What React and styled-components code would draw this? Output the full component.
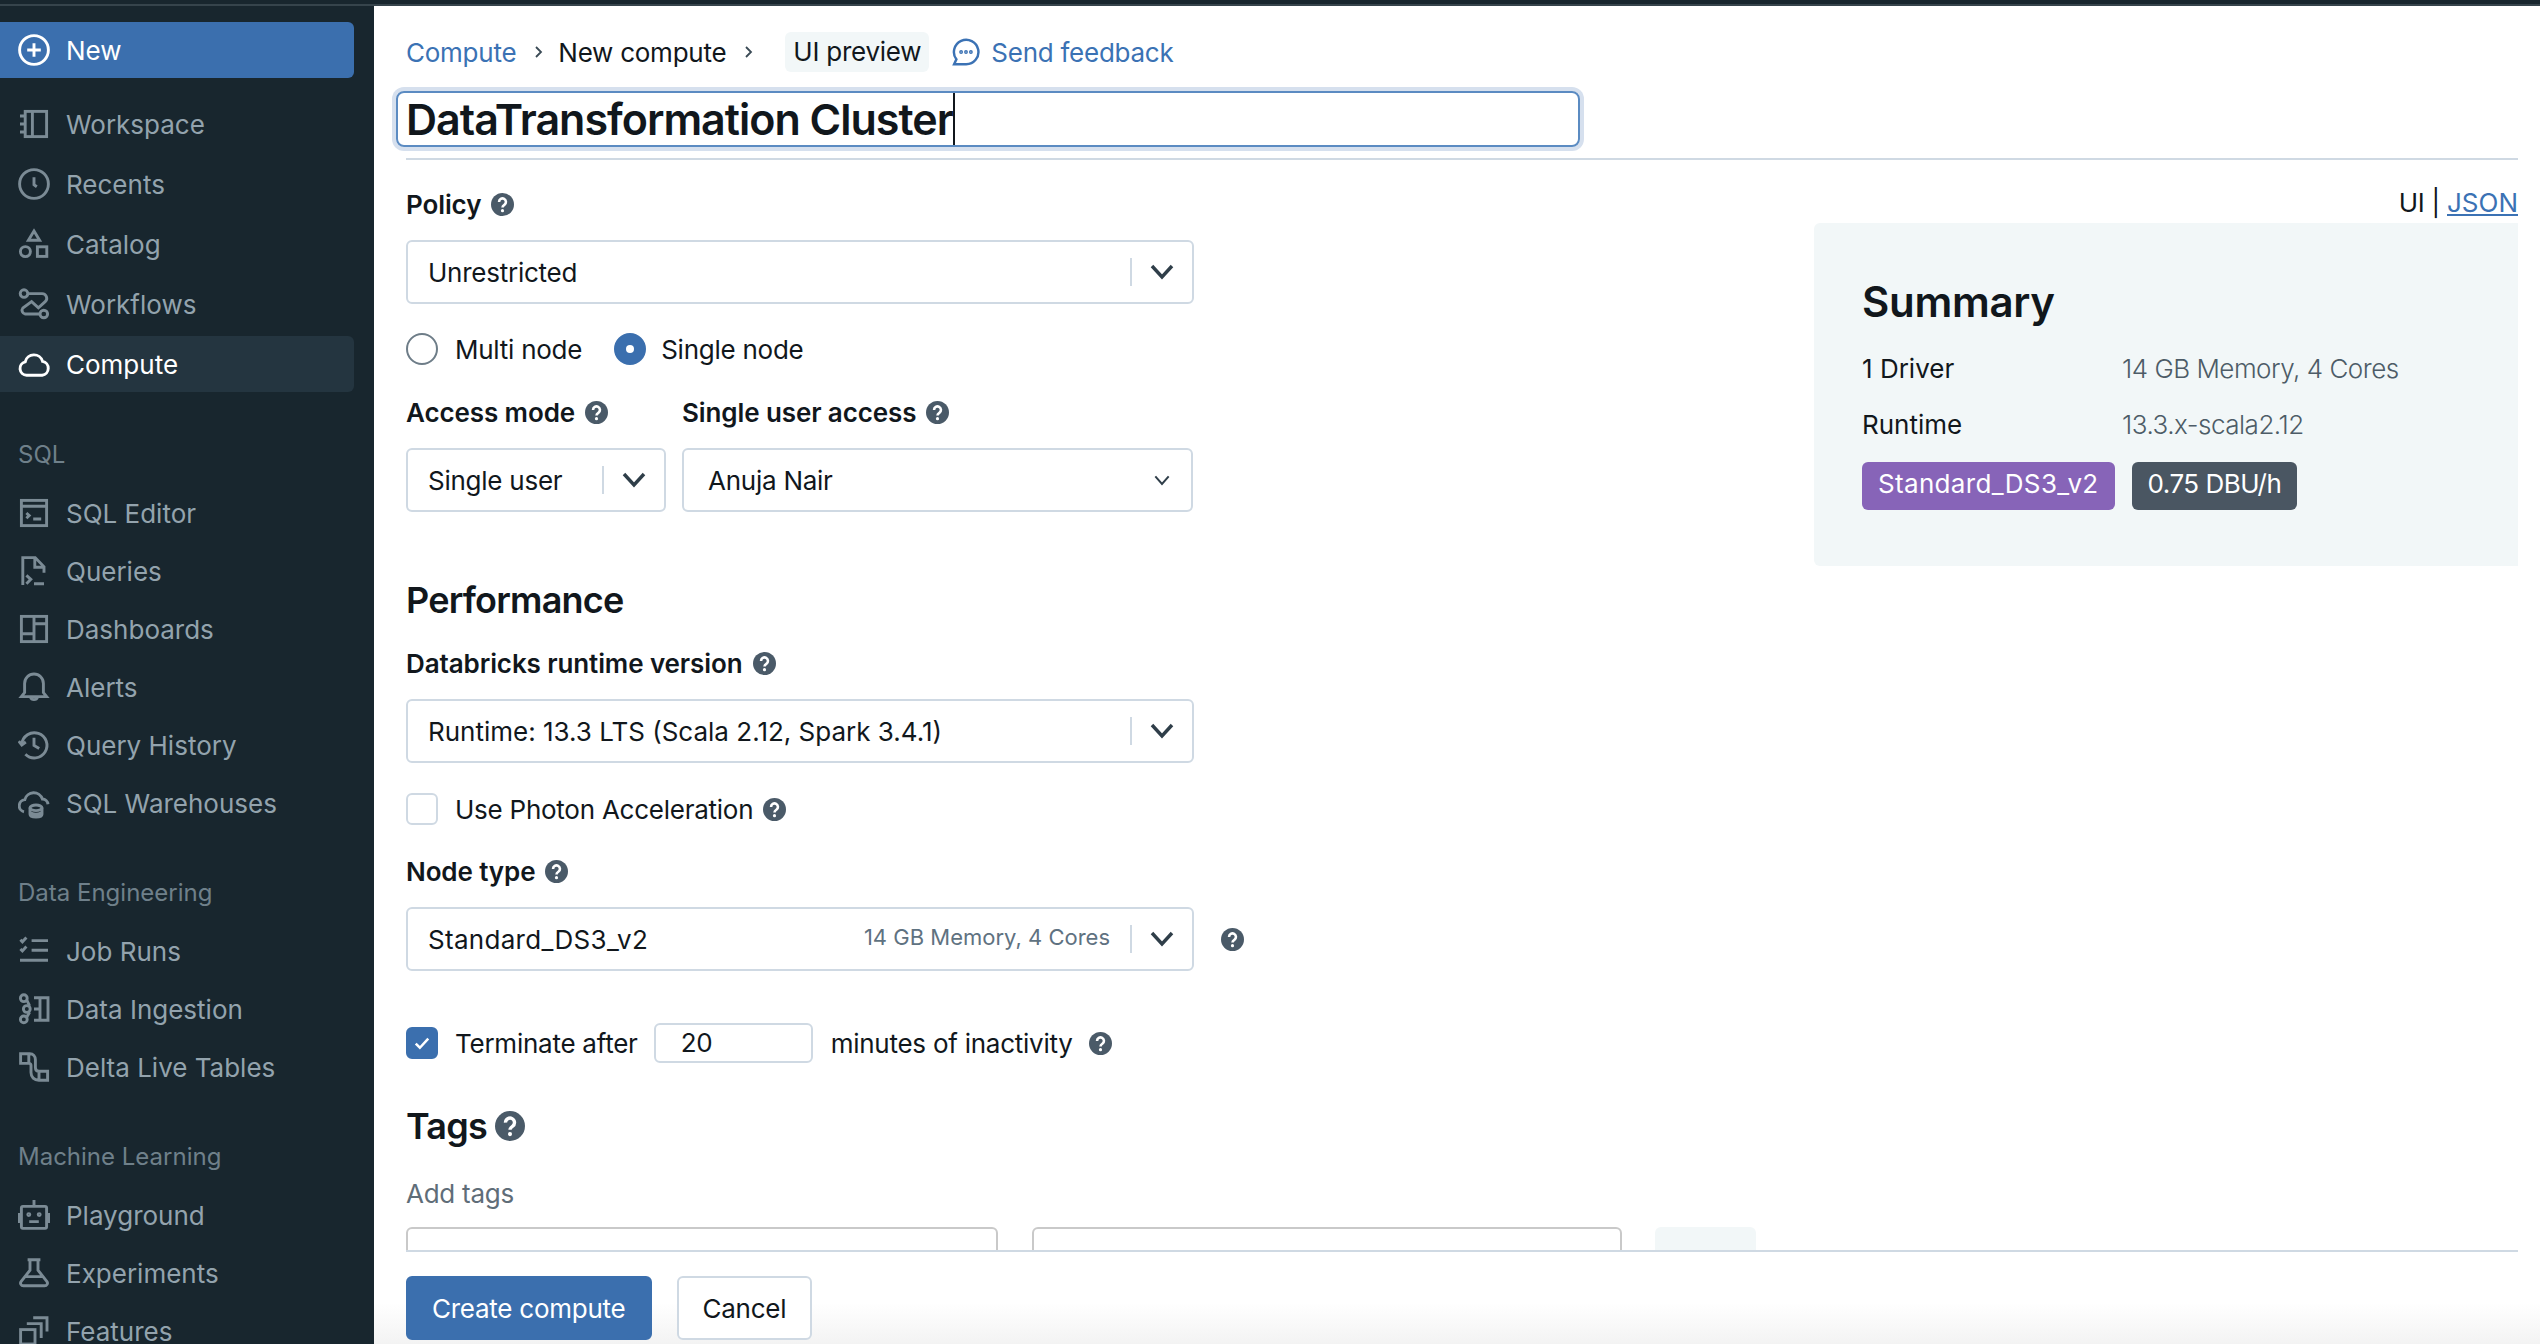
import React from 'react';
import styled, { createGlobalStyle } from 'styled-components';

const GlobalStyle = createGlobalStyle`
  html, body {
    margin: 0;
    padding: 0;
    height: 100%;
    background: #fff;
    overflow: hidden;
  }
  * {
    box-sizing: border-box;
  }
  body {
    font-family: Inter, "Noto Sans", sans-serif;
    font-size: 26px;
    color: #11171c;
  }
`;

const Page = styled.div`
  width: 2540px;
  height: 1344px;
  display: flex;
  flex-direction: column;
  overflow: hidden;
`;

const TopStrip = styled.div`
  height: 6px;
  flex: none;
  background: #18262e;
  border-bottom: 2px solid #36444c;
`;

const Body = styled.div`
  flex: 1;
  display: flex;
  min-height: 0;
`;

const Sidebar = styled.nav`
  width: 374px;
  flex: none;
  background: #18262e;
  padding: 16px 20px 0 0;
  overflow: hidden;
`;

const NewButton = styled.div`
  height: 56px;
  display: flex;
  align-items: center;
  gap: 16px;
  padding-left: 18px;
  background: #3b6fae;
  color: #fff;
  border-radius: 0 6px 6px 0;
  margin-bottom: 18px;
`;

const NavGroup = styled.div`
  display: flex;
  flex-direction: column;
  gap: 4px;
`;

const NavItem = styled.div`
  height: ${(p) => (p.$tall ? '56px' : '54px')};
  flex: none;
  display: flex;
  align-items: center;
  gap: 16px;
  padding-left: 18px;
  border-radius: 0 6px 6px 0;
  color: ${(p) => (p.$active ? '#fff' : '#93a3ad')};
  background: ${(p) => (p.$active ? '#243540' : 'transparent')};
`;

const NavIcon = styled.svg`
  width: 32px;
  height: 32px;
  flex: none;
  fill: none;
  stroke: ${(p) => (p.$active ? '#fff' : '#7b8b95')};
  stroke-width: 1.45;
`;

const NavSectionLabel = styled.div`
  height: 30px;
  line-height: 30px;
  margin: 48px 0 16px 18px;
  font-size: 24px;
  color: #6f808a;
`;

const Main = styled.main`
  flex: 1;
  min-width: 0;
  display: flex;
  flex-direction: column;
  letter-spacing: -0.25px;
`;

const Scroller = styled.div`
  flex: 1;
  min-height: 0;
  overflow: hidden;
  padding: 26px 22px 0 32px;
`;

const Breadcrumbs = styled.div`
  height: 40px;
  display: flex;
  align-items: center;
`;

const CrumbLink = styled.span`
  color: #3b72b4;
`;

const CrumbSep = styled.svg`
  width: 10px;
  height: 14px;
  margin: 0 15px 0 17px;
  fill: none;
  stroke: #3a4a55;
  stroke-width: 1.8;
  flex: none;
`;

const PreviewChip = styled.span`
  height: 40px;
  line-height: 40px;
  padding: 0 8px;
  margin-left: 17px;
  border-radius: 6px;
  background: #f2f7f8;
`;

const Feedback = styled.span`
  display: flex;
  align-items: center;
  gap: 11px;
  margin-left: 23px;
  color: #3b72b4;
`;

const FeedbackIcon = styled.svg`
  width: 28px;
  height: 28px;
  fill: none;
  stroke: #3b72b4;
  stroke-width: 1.4;
`;

const TitleBox = styled.div`
  width: 1184px;
  height: 56px;
  margin: 19px 0 11px -10px;
  padding-left: 8px;
  display: flex;
  align-items: center;
  border: 2px solid #5b8bc2;
  border-radius: 8px;
  box-shadow: 0 0 0 4px #d6e0ee;
  font-size: 43px;
  font-weight: 600;
  letter-spacing: -1px;
`;

const Caret = styled.span`
  width: 2px;
  height: 52px;
  background: #11171c;
  flex: none;
`;

const HeaderRule = styled.div`
  height: 2px;
  background: #cfd9e3;
`;

const Columns = styled.div`
  display: flex;
`;

const FormColumn = styled.div`
  width: 1408px;
  flex: none;
  padding-top: 28px;
`;

const SummaryColumn = styled.aside`
  flex: 1;
  min-width: 0;
  padding-top: 27px;
`;

const Label = styled.div`
  height: 32px;
  display: flex;
  align-items: center;
  gap: 10px;
  font-weight: 600;
  letter-spacing: -0.1px;
  margin-top: ${(p) => p.$top || 0}px;
  margin-bottom: 20px;
`;

const HelpIcon = styled.svg`
  width: ${(p) => p.$size || 23}px;
  height: ${(p) => p.$size || 23}px;
  flex: none;
`;

const SelectBox = styled.div`
  width: ${(p) => p.$width || 788}px;
  height: 64px;
  display: flex;
  align-items: center;
  flex: none;
  padding-left: ${(p) => p.$pad || 20}px;
  border: 2px solid #cfd9e3;
  border-radius: 6px;
  background: #fff;
`;

const SelectValue = styled.span`
  letter-spacing: ${(p) => p.$spacing ?? -0.25}px;
`;

const SelectHint = styled.span`
  margin-left: auto;
  margin-right: 20px;
  padding-bottom: 4px;
  font-size: 22px;
  color: #5f7281;
  letter-spacing: 0;
`;

const SelectDivider = styled.span`
  width: 2px;
  height: 28px;
  background: #cfd9e3;
  flex: none;
  margin-left: ${(p) => (p.$auto ? 'auto' : '0')};
`;

const ChevronSlot = styled.span`
  width: ${(p) => (p.$small ? '58px' : '60px')};
  display: flex;
  justify-content: center;
  margin-left: ${(p) => (p.$small ? 'auto' : '0')};
  flex: none;
`;

const Chevron = styled.svg`
  width: ${(p) => (p.$small ? '16px' : '24px')};
  height: ${(p) => (p.$small ? '11px' : '16px')};
  fill: none;
  stroke: #2f3e49;
  stroke-width: ${(p) => (p.$small ? 3 : 3.4)};
`;

const OptionRow = styled.div`
  height: 32px;
  display: flex;
  align-items: center;
  margin-top: ${(p) => p.$top || 0}px;
`;

const Radio = styled.span`
  width: 32px;
  height: 32px;
  flex: none;
  border-radius: 50%;
  display: flex;
  align-items: center;
  justify-content: center;
  border: 2px solid ${(p) => (p.$on ? '#3b6fae' : '#6e7d88')};
  background: ${(p) => (p.$on ? '#3b6fae' : '#fff')};
  margin-right: ${(p) => (p.$on ? 15 : 17)}px;

  &::after {
    content: '';
    width: 8px;
    height: 8px;
    border-radius: 50%;
    background: ${(p) => (p.$on ? '#fff' : 'transparent')};
  }
`;

const OptionText = styled.span`
  margin-right: ${(p) => p.$gap || 0}px;
`;

const CheckBox = styled.span`
  width: 32px;
  height: 32px;
  flex: none;
  display: flex;
  align-items: center;
  justify-content: center;
  border-radius: 6px;
  border: 2px solid ${(p) => (p.$on ? '#3b6fae' : '#cfd9e3')};
  background: ${(p) => (p.$on ? '#3b6fae' : '#fff')};
  margin-right: 17px;
`;

const CheckMark = styled.svg`
  width: 20px;
  height: 20px;
  fill: none;
  stroke: #fff;
  stroke-width: 2;
`;

const AccessGrid = styled.div`
  display: grid;
  grid-template-columns: 260px 511px;
  column-gap: 16px;
  margin-top: 31px;
`;

const SectionTitle = styled.h2`
  margin: ${(p) => p.$top || 0}px 0 0;
  height: 44px;
  display: flex;
  align-items: center;
  gap: 8px;
  font-size: 36px;
  font-weight: 600;
  letter-spacing: -0.8px;
`;

const NodeRow = styled.div`
  display: flex;
  align-items: center;
  gap: 27px;
`;

const TerminateRow = styled.div`
  height: 40px;
  display: flex;
  align-items: center;
  margin-top: 52px;
`;

const MinutesInput = styled.div`
  width: 159px;
  height: 40px;
  line-height: 36px;
  margin: 0 18px 0 16px;
  padding-left: 25px;
  border: 2px solid #cfd9e3;
  border-radius: 6px;
`;

const MutedLabel = styled.div`
  height: 32px;
  line-height: 32px;
  margin: 30px 0 17px;
  color: #5f6d78;
`;

const TagRow = styled.div`
  display: flex;
  align-items: flex-start;
`;

const TagField = styled.div`
  width: ${(p) => p.$width}px;
  height: 64px;
  flex: none;
  margin-right: ${(p) => p.$gap}px;
  border: 2px solid #c9c9c9;
  border-radius: 6px;
`;

const TagAdd = styled.div`
  width: 101px;
  height: 64px;
  flex: none;
  border-radius: 6px;
  background: #f2f7f8;
`;

const ModeSwitch = styled.div`
  height: 32px;
  line-height: 32px;
  text-align: right;
  margin-bottom: 4px;
`;

const JsonLink = styled.span`
  color: #3b72b4;
  text-decoration: underline;
  letter-spacing: 0;
`;

const SummaryPanel = styled.section`
  background: #f2f7f8;
  border-radius: 6px 0 0 6px;
  padding: 57px 0 56px 48px;
`;

const SummaryTitle = styled.h1`
  margin: 0 0 29px;
  height: 44px;
  line-height: 44px;
  font-size: 42px;
  font-weight: 600;
  letter-spacing: -0.3px;
`;

const SummaryRow = styled.div`
  display: grid;
  grid-template-columns: 260px 1fr;
  height: 32px;
  line-height: 32px;
  letter-spacing: 0;
  margin-bottom: ${(p) => p.$gap}px;
`;

const SummaryValue = styled.span`
  color: #4d5c67;
  font-weight: 300;
  letter-spacing: -0.5px;
`;

const Badges = styled.div`
  display: flex;
  gap: 17px;
`;

const Badge = styled.span`
  height: 48px;
  line-height: 44px;
  padding: 0 16px;
  border-radius: 6px;
  color: #fff;
  background: ${(p) => p.$color};
  letter-spacing: ${(p) => p.$spacing}px;
`;

const FooterWrap = styled.footer`
  height: 94px;
  flex: none;
  padding: 0 22px 0 32px;
  background: linear-gradient(to bottom, #fff 56%, #f3f3f3 100%);
`;

const FooterBar = styled.div`
  border-top: 2px solid #cfd9e3;
  padding-top: 24px;
  display: flex;
  gap: 25px;
`;

const FooterButton = styled.button`
  height: 64px;
  padding: 0 24px;
  font: inherit;
  letter-spacing: inherit;
  border-radius: 6px;
  border: 2px solid ${(p) => (p.$primary ? '#3b6fae' : '#cfd9e3')};
  background: ${(p) => (p.$primary ? '#3b6fae' : '#fff')};
  color: ${(p) => (p.$primary ? '#fff' : '#11171c')};
`;

const ICONS = {
  plus: (
    <>
      <circle cx="8" cy="8" r="7.2" />
      <path d="M8 4.6v6.8M4.6 8h6.8" />
    </>
  ),
  workspace: (
    <>
      <rect x="3.6" y="1.7" width="10.7" height="12.6" />
      <path d="M7.2 1.7v12.6M1 4h2.6M1 8h2.6M1 12h2.6" />
    </>
  ),
  clock: (
    <>
      <circle cx="8" cy="8" r="7.2" />
      <path d="M8 4.6v3.8l1.4 1" />
    </>
  ),
  catalog: (
    <>
      <path d="M8 1.5l2.8 4.6H5.2z" />
      <circle cx="3.7" cy="11.8" r="2.5" />
      <rect x="9.7" y="9.4" width="4.7" height="4.8" />
    </>
  ),
  workflows: (
    <>
      <circle cx="3" cy="2.8" r="1.9" />
      <circle cx="12.9" cy="13" r="1.9" />
      <path d="M5 2.8h7a2.3 2.3 0 0 1 1.6 4L10.2 9.9 6.8 6.8 2.4 10a1.9 1.9 0 0 0 1.2 3H11" />
    </>
  ),
  cloud: <path d="M4.3 13.6a3.4 3.4 0 0 1-.7-6.7 4.5 4.5 0 0 1 8.7-.2 3.5 3.5 0 0 1-.2 6.9z" />,
  editor: (
    <>
      <rect x="1.7" y="1.7" width="12.6" height="12.6" />
      <path d="M1.7 4.6h12.6M4.2 8l1.4 1.3-1.4 1.3M7.6 11h4" />
    </>
  ),
  queries: (
    <path d="M2.4 15V1.3h6.2l4.4 4.6v3M8.4 1.3v4.8H13M4.2 10.2l2.2 2-2.2 2.2M8 14.4h5" />
  ),
  dashboards: (
    <>
      <rect x="1.7" y="1.7" width="12.6" height="12.6" />
      <path d="M8 1.7v12.6M1.7 10.4H8M8 5.4h6.3" />
    </>
  ),
  bell: (
    <>
      <path d="M3.3 10.8V6.2a4.7 4.7 0 0 1 9.4 0v4.6l1.6 2H1.7z" />
      <path d="M6.2 13a1.9 1.9 0 0 0 3.6 0" />
    </>
  ),
  history: (
    <>
      <path d="M1.9 7.6a6.3 6.3 0 1 1 1.8 5" />
      <path d="M0.4 6.1L1.9 8l2-1.5M8 4.4v3.8l2.6 1.6" />
    </>
  ),
  warehouse: (
    <>
      <path d="M3 12.4A3.1 3.1 0 0 1 3.4 6.3 4.6 4.6 0 0 1 12.2 6a3 3 0 0 1 2.8 2.6" />
      <ellipse cx="9" cy="10.4" rx="3" ry="1.4" />
      <path d="M6 10.4v3.2c0 .8 1.3 1.4 3 1.4s3-.6 3-1.4v-3.2M6 12.2c0 .8 1.3 1.4 3 1.4s3-.6 3-1.4" />
    </>
  ),
  jobs: (
    <path d="M1.2 2.4l1 1 2-2.2M6.8 2.8H15M1.2 7l1 1 2-2.2M6.8 7.6H15M1 12.6h14" />
  ),
  ingestion: (
    <>
      <circle cx="2.9" cy="2.6" r="1.7" />
      <circle cx="4.4" cy="8" r="1.7" />
      <circle cx="2.9" cy="13.2" r="1.7" />
      <path d="M4.4 3.6l1.4 2.8M5.8 9.6L4.4 12M8 2.4h3v11.2H8M8 8h3M11 2.4h4v11.2h-4" />
    </>
  ),
  delta: (
    <path d="M1.3 1.4h4.6c1.7 0 2.8 1.2 2.8 3v3.8c0 1.2.6 1.9 1.8 1.9h4.3v4.5h-4.4c-2.3 0-3.900-1.500-3.900-3.800V7.300c0-.6-.3-1.100-1-1.100H1.300zM5.400 1.400v4.800M10.500 10.100v4.500" />
  ),
  robot: (
    <>
      <rect x="1.700" y="3.700" width="12.600" height="11" rx="0.800" />
      <path d="M8 .5v3.200M.7 7v5M15.300 7v5M5.600 11.300h4.800" />
      <circle cx="5.400" cy="7.800" r=".5" />
      <circle cx="10.600" cy="7.800" r=".5" />
    </>
  ),
  flask: (
    <path d="M4.800 1.400h6.400M6 1.400v5.200L1.600 12.200c-.8 1 0 2.200 1.100 2.200h10.600c1.100 0 1.900-1.200 1.100-2.200L10 6.600V1.400M3.800 9.800h8.400" />
  ),
  features: (
    <>
      <rect x="1.300" y="7.300" width="7.200" height="7.200" />
      <path d="M4.400 4.300h7.200v7.200M7.600 1.400h6.900v6.900" />
    </>
  ),
};

const Icon = ({ name, active }) => (
  <NavIcon viewBox="0 0 16 16" $active={active}>
    {ICONS[name]}
  </NavIcon>
);

const Help = ({ size }) => (
  <HelpIcon viewBox="0 0 16 16" $size={size}>
    <circle cx="8" cy="8" r="8" fill="#4a5a68" />
    <path
      d="M5.600 6.200a2.400 2.400 0 1 1 3.700 2c-.9.600-1.300 1-1.300 1.800"
      fill="none"
      stroke="#fff"
      strokeWidth="1.800"
    />
    <circle cx="8" cy="12.300" r="1.100" fill="#fff" />
  </HelpIcon>
);

const ChevronDown = ({ small }) => (
  <Chevron viewBox="0 0 24 16" $small={small} preserveAspectRatio="none">
    <path d="M2 2l10 11L22 2" />
  </Chevron>
);

const Select = ({ width, value, hint, spacing }) => (
  <SelectBox $width={width}>
    <SelectValue $spacing={spacing}>{value}</SelectValue>
    {hint && <SelectHint>{hint}</SelectHint>}
    <SelectDivider $auto={!hint} />
    <ChevronSlot>
      <ChevronDown />
    </ChevronSlot>
  </SelectBox>
);

const Sep = () => (
  <CrumbSep viewBox="0 0 10 14">
    <path d="M3 2l5 5-5 5" />
  </CrumbSep>
);

const NAV_TOP = [
  ['workspace', 'Workspace'],
  ['clock', 'Recents'],
  ['catalog', 'Catalog'],
  ['workflows', 'Workflows'],
];

const NAV_SECTIONS = [
  {
    title: 'SQL',
    items: [
      ['editor', 'SQL Editor'],
      ['queries', 'Queries'],
      ['dashboards', 'Dashboards'],
      ['bell', 'Alerts'],
      ['history', 'Query History'],
      ['warehouse', 'SQL Warehouses'],
    ],
  },
  {
    title: 'Data Engineering',
    items: [
      ['jobs', 'Job Runs'],
      ['ingestion', 'Data Ingestion'],
      ['delta', 'Delta Live Tables'],
    ],
  },
  {
    title: 'Machine Learning',
    items: [
      ['robot', 'Playground'],
      ['flask', 'Experiments'],
      ['features', 'Features'],
    ],
  },
];

const App = () => (
  <Page>
    <GlobalStyle />
    <TopStrip />
    <Body>
      <Sidebar>
        <NewButton>
          <Icon name="plus" active />
          <span>New</span>
        </NewButton>
        <NavGroup>
          {NAV_TOP.map(([icon, label]) => (
            <NavItem $tall key={label}>
              <Icon name={icon} />
              <span>{label}</span>
            </NavItem>
          ))}
          <NavItem $tall $active>
            <Icon name="cloud" active />
            <span>Compute</span>
          </NavItem>
        </NavGroup>
        {NAV_SECTIONS.map((section) => (
          <div key={section.title}>
            <NavSectionLabel>{section.title}</NavSectionLabel>
            <NavGroup>
              {section.items.map(([icon, label]) => (
                <NavItem key={label}>
                  <Icon name={icon} />
                  <span>{label}</span>
                </NavItem>
              ))}
            </NavGroup>
          </div>
        ))}
      </Sidebar>

      <Main>
        <Scroller>
          <Breadcrumbs>
            <CrumbLink>Compute</CrumbLink>
            <Sep />
            <span>New compute</span>
            <Sep />
            <PreviewChip>UI preview</PreviewChip>
            <Feedback>
              <FeedbackIcon viewBox="0 0 16 16">
                <path d="M1.200 15l1.300-2.800A7 7 0 1 1 8 15z" />
                <circle cx="5.200" cy="8" r=".4" />
                <circle cx="8" cy="8" r=".4" />
                <circle cx="10.800" cy="8" r=".4" />
              </FeedbackIcon>
              Send feedback
            </Feedback>
          </Breadcrumbs>
          <TitleBox>
            DataTransformation Cluster
            <Caret />
          </TitleBox>
          <HeaderRule />

          <Columns>
            <FormColumn>
              <Label>
                Policy <Help />
              </Label>
              <Select value="Unrestricted" />
              <OptionRow $top={29}>
                <Radio />
                <OptionText $gap={32}>Multi node</OptionText>
                <Radio $on />
                <OptionText>Single node</OptionText>
              </OptionRow>

              <AccessGrid>
                <Label>
                  Access mode <Help />
                </Label>
                <Label>
                  Single user access <Help />
                </Label>
                <Select width={260} value="Single user" />
                <SelectBox $width={511} $pad={24}>
                  <SelectValue>Anuja Nair</SelectValue>
                  <ChevronSlot $small>
                    <ChevronDown small />
                  </ChevronSlot>
                </SelectBox>
              </AccessGrid>

              <SectionTitle $top={66}>Performance</SectionTitle>
              <Label $top={25}>
                Databricks runtime version <Help />
              </Label>
              <Select value="Runtime: 13.3 LTS (Scala 2.12, Spark 3.4.1)" spacing={0} />
              <OptionRow $top={30}>
                <CheckBox />
                <OptionText $gap={10}>Use Photon Acceleration</OptionText>
                <Help />
              </OptionRow>

              <Label $top={30}>
                Node type <Help />
              </Label>
              <NodeRow>
                <Select value="Standard_DS3_v2" hint="14 GB Memory, 4 Cores" spacing={0.3} />
                <Help />
              </NodeRow>

              <TerminateRow>
                <CheckBox $on>
                  <CheckMark viewBox="0 0 16 16">
                    <path d="M3 8.500l3.300 3.300L13 4.500" />
                  </CheckMark>
                </CheckBox>
                <span>Terminate after</span>
                <MinutesInput>20</MinutesInput>
                <OptionText $gap={16}>minutes of inactivity</OptionText>
                <Help />
              </TerminateRow>

              <SectionTitle $top={41}>
                Tags <Help size={30} />
              </SectionTitle>
              <MutedLabel>Add tags</MutedLabel>
              <TagRow>
                <TagField $width={592} $gap={34} />
                <TagField $width={590} $gap={33} />
                <TagAdd />
              </TagRow>
            </FormColumn>

            <SummaryColumn>
              <ModeSwitch>
                UI | <JsonLink>JSON</JsonLink>
              </ModeSwitch>
              <SummaryPanel>
                <SummaryTitle>Summary</SummaryTitle>
                <SummaryRow $gap={24}>
                  <span>1 Driver</span>
                  <SummaryValue>14 GB Memory, 4 Cores</SummaryValue>
                </SummaryRow>
                <SummaryRow $gap={21}>
                  <span>Runtime</span>
                  <SummaryValue>13.3.x-scala2.12</SummaryValue>
                </SummaryRow>
                <Badges>
                  <Badge $color="#8764b8" $spacing={0.33}>Standard_DS3_v2</Badge>
                  <Badge $color="#4a5662" $spacing={-0.5}>0.75 DBU/h</Badge>
                </Badges>
              </SummaryPanel>
            </SummaryColumn>
          </Columns>
        </Scroller>

        <FooterWrap>
          <FooterBar>
            <FooterButton $primary>Create compute</FooterButton>
            <FooterButton>Cancel</FooterButton>
          </FooterBar>
        </FooterWrap>
      </Main>
    </Body>
  </Page>
);

export default App;
